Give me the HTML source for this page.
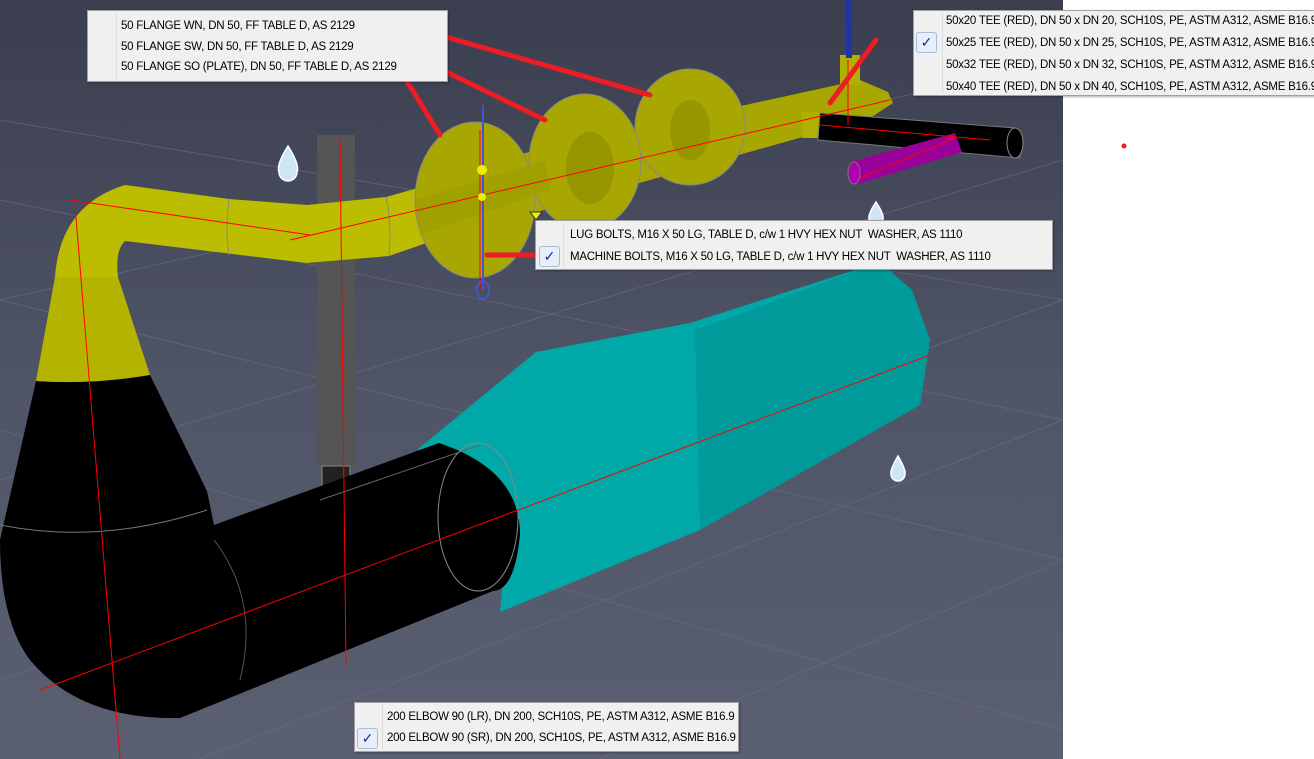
<!DOCTYPE html>
<html><head><style>
body{margin:0;width:1314px;height:759px;overflow:hidden;background:#fff;font-family:"Liberation Sans",sans-serif}
.vp{position:absolute;left:0;top:0;width:1063px;height:759px;background:linear-gradient(#3a3e4e,#4f5467 50%,#5b5f72)}
.menu{position:absolute;background:#f0f0f0;border:1px solid #a0a0a0;font-size:11.5px;color:#000;box-shadow:1px 1px 2px rgba(0,0,0,.3);overflow:hidden}
.menu .g{position:absolute;top:2px;bottom:2px;border-right:1px solid #ddd}
.menu div.r{position:absolute;white-space:nowrap;letter-spacing:-0.25px}
.ck{position:absolute;width:19px;height:19px;border:1px solid #a8bcd8;border-radius:3px;background:#e8eef8;color:#1a2a9a;font-size:14px;text-align:center;line-height:19px}
</style></head><body>
<div class="vp"></div>
<svg width="1063" height="759" style="position:absolute;left:0;top:0">
<g stroke="#6a6f80" stroke-width="1" opacity=".6">
<line x1="0" y1="120" x2="1063" y2="300"/><line x1="0" y1="200" x2="1063" y2="420"/><line x1="0" y1="300" x2="1063" y2="560"/><line x1="0" y1="430" x2="1063" y2="730"/>
<line x1="0" y1="300" x2="1063" y2="60"/><line x1="0" y1="480" x2="1063" y2="160"/><line x1="0" y1="680" x2="1063" y2="300"/><line x1="200" y1="759" x2="1063" y2="420"/><line x1="600" y1="759" x2="1063" y2="560"/>
</g>
<polygon points="418,449 536,352 690,323 880,262 912,290 930,340 920,405 700,530 500,612 505,560" fill="#00a8a8"/>
<polygon points="695,330 880,262 912,290 930,340 920,405 700,530" fill="#009a9a"/>
<rect x="317" y="135" width="38" height="335" fill="#555"/>
<rect x="322" y="466" width="28" height="26" fill="#222" stroke="#888"/>
<ellipse cx="336" cy="495" rx="20" ry="7" fill="#222" stroke="#999"/>
<path d="M36,381 L150,375 L207,491 L214,525 L439,443 Q520,470 520,534 Q515,590 493,591 L180,718 Q80,720 30,660 Q0,620 0,540 Z" fill="#000"/>
<ellipse cx="478" cy="517" rx="40" ry="74" fill="none" stroke="#888" stroke-width="1"/>
<path d="M0,525 Q100,545 207,510" fill="none" stroke="#777"/>
<path d="M214,540 Q260,600 240,680" fill="none" stroke="#555"/>
<path d="M320,500 L480,445" stroke="#666"/>
<path d="M55,277 L118,277 L150,375 Q90,385 36,381 Z" fill="#b4b400"/>
<path d="M55,277 Q60,205 125,185 L229,199 L307,205 L386,197 L482,170 L493,220 L389,256 L307,263 L125,241 Q115,250 118,277 Z" fill="#bcbc00"/>
<path d="M229,199 Q225,230 229,255 M386,197 Q392,225 389,256" stroke="#888" fill="none"/>
<polygon points="470,165 860,80 888,92 893,103 870,118 480,228" fill="#a8a600"/>
<rect x="840" y="55" width="20" height="30" fill="#b0b000"/>
<ellipse cx="690" cy="127" rx="55" ry="58" fill="#a8a600" stroke="#888"/>
<ellipse cx="690" cy="130" rx="20" ry="30" fill="#979500"/>
<ellipse cx="585" cy="162" rx="56" ry="68" fill="#a8a600" stroke="#888"/>
<ellipse cx="590" cy="168" rx="24" ry="36" fill="#979500"/>
<ellipse cx="475" cy="200" rx="60" ry="78" fill="#a8a600" stroke="#888"/>
<polygon points="415,200 545,160 550,190 420,235" fill="#a0a000"/>
<rect x="802" y="112" width="22" height="26" fill="#b0b000"/>
<polygon points="820,113 1015,128 1020,158 818,140" fill="#000" stroke="#777"/>
<ellipse cx="1015" cy="143" rx="8" ry="15" fill="#000" stroke="#888"/>
<polygon points="850,162 955,133 962,152 858,184" fill="#9a009a"/>
<ellipse cx="854" cy="173" rx="6" ry="11" fill="#b000b0" stroke="#777"/>
<line x1="849" y1="0" x2="849" y2="58" stroke="#2233aa" stroke-width="6"/>
<g stroke="#ff0000" stroke-width="1">
<line x1="75" y1="205" x2="120" y2="759"/><line x1="290" y1="240" x2="890" y2="100"/><line x1="70" y1="200" x2="310" y2="235"/>
<line x1="40" y1="690" x2="930" y2="355"/><line x1="340" y1="140" x2="346" y2="665"/><line x1="480" y1="130" x2="480" y2="290"/>
<line x1="820" y1="125" x2="990" y2="140"/><line x1="860" y1="178" x2="955" y2="138"/><line x1="848" y1="60" x2="848" y2="125"/>
</g>
<line x1="483" y1="105" x2="483" y2="290" stroke="#4455cc" stroke-width="2"/>
<ellipse cx="483" cy="290" rx="6" ry="9" fill="none" stroke="#4455cc" stroke-width="2"/>
<circle cx="482" cy="170" r="5" fill="#ee0"/>
<circle cx="482" cy="197" r="4" fill="#ee0"/>
<polygon points="530,212 542,212 536,220" fill="#ee0" stroke="#333"/>
<g stroke="#ee1c24" stroke-width="5" stroke-linecap="round">
<line x1="393" y1="22" x2="650" y2="95"/><line x1="393" y1="46" x2="545" y2="120"/><line x1="400" y1="70" x2="440" y2="135"/>
<line x1="876" y1="40" x2="830" y2="103"/><line x1="487" y1="255" x2="535" y2="255"/>
</g>
<g fill="#cfe6f5" stroke="#fff" stroke-width="1.5">
<path d="M288,146 Q300,165 297,172 A9,9 0 1 1 279,172 Q276,165 288,146Z"/>
<path d="M898,456 Q906,470 905,474 A7,7 0 1 1 891,474 Q890,470 898,456Z"/>
<path d="M876,202 Q884,214 883,219 A7,7 0 1 1 869,219 Q868,214 876,202Z"/>
</g>
</svg>
<svg width="1314" height="759" style="position:absolute;left:0;top:0"><circle cx="1124" cy="146" r="2.5" fill="#ee1c24"/></svg>

<div class="menu" style="left:87px;top:10px;width:359px;height:70px"><div class="g" style="left:28px"></div>
<div class="r" style="left:33px;top:9px">50 FLANGE WN, DN 50, FF TABLE D, AS 2129</div>
<div class="r" style="left:33px;top:30px">50 FLANGE SW, DN 50, FF TABLE D, AS 2129</div>
<div class="r" style="left:33px;top:50px">50 FLANGE SO (PLATE), DN 50, FF TABLE D, AS 2129</div></div>

<div class="menu" style="left:913px;top:10px;width:405px;height:84px"><div class="g" style="left:28px"></div>
<div class="ck" style="left:2px;top:21px">✓</div>
<div class="r" style="left:32px;top:4px">50x20 TEE (RED), DN 50 x DN 20, SCH10S, PE, ASTM A312, ASME B16.9</div>
<div class="r" style="left:32px;top:26px">50x25 TEE (RED), DN 50 x DN 25, SCH10S, PE, ASTM A312, ASME B16.9</div>
<div class="r" style="left:32px;top:48px">50x32 TEE (RED), DN 50 x DN 32, SCH10S, PE, ASTM A312, ASME B16.9</div>
<div class="r" style="left:32px;top:70px">50x40 TEE (RED), DN 50 x DN 40, SCH10S, PE, ASTM A312, ASME B16.9</div></div>

<div class="menu" style="left:535px;top:220px;width:516px;height:48px"><div class="g" style="left:27px"></div>
<div class="ck" style="left:3px;top:25px">✓</div>
<div class="r" style="left:34px;top:8px">LUG BOLTS, M16 X 50 LG, TABLE D, c/w 1 HVY HEX NUT &nbsp;WASHER, AS 1110</div>
<div class="r" style="left:34px;top:30px">MACHINE BOLTS, M16 X 50 LG, TABLE D, c/w 1 HVY HEX NUT &nbsp;WASHER, AS 1110</div></div>

<div class="menu" style="left:354px;top:702px;width:383px;height:48px"><div class="g" style="left:27px"></div>
<div class="ck" style="left:2px;top:25px">✓</div>
<div class="r" style="left:32px;top:8px">200 ELBOW 90 (LR), DN 200, SCH10S, PE, ASTM A312, ASME B16.9</div>
<div class="r" style="left:32px;top:29px">200 ELBOW 90 (SR), DN 200, SCH10S, PE, ASTM A312, ASME B16.9</div></div>
</body></html>
